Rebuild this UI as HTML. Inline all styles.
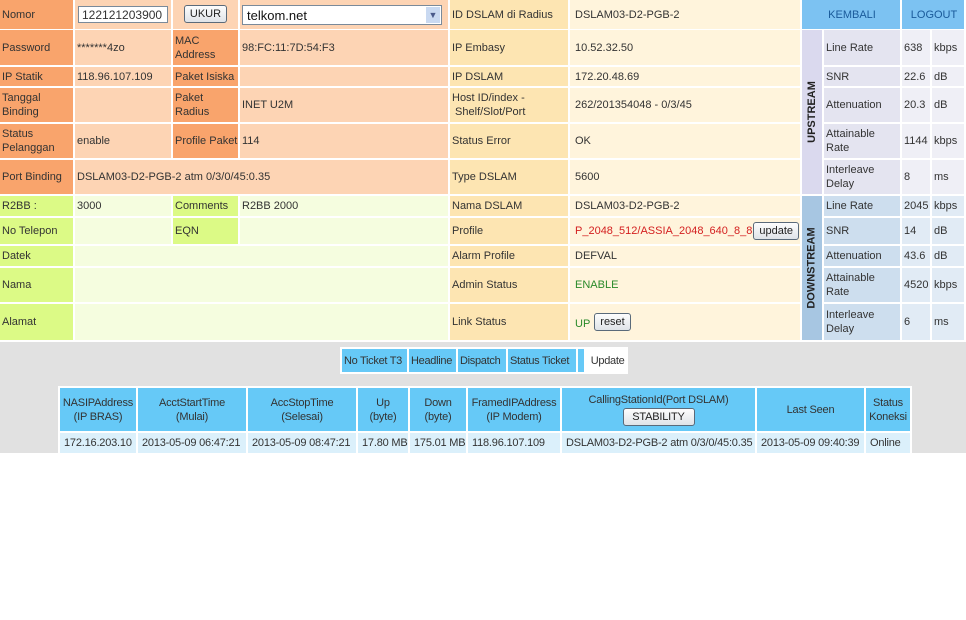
<!DOCTYPE html>
<html><head><meta charset="utf-8"><style>
body{margin:0;width:966px;height:620px;background:#fff;position:relative;overflow:hidden;font-family:"Liberation Sans",Arial,sans-serif}
.c{position:absolute;display:flex;align-items:center;padding-left:2px;box-sizing:border-box;font-size:11px;line-height:14px;color:#333;white-space:nowrap}
.ol{background:#f9a46c}.ov{background:#fdd4b4}
.gl{background:#dcfa86}.gv{background:#f5fddf}
.yl{background:#fde5b2}.yv{background:#fff4dc}
.ul{background:#e4e4f0}.uv{background:#efeff6}
.dl{background:#cddeee}.dv{background:#e1ebf5}
.btn{border:1px solid #5a6a7a;border-radius:3px;background:linear-gradient(#fdfdfd,#dfe3e8);font-size:11px;padding:1px 5px;color:#222}
.vt{position:absolute;display:flex;align-items:center;justify-content:center}
.vt span{transform:rotate(-90deg);font-weight:bold;font-size:11px;color:#222;white-space:nowrap}
.h{position:absolute;top:388px;height:43px;background:#66c9f7;display:flex;flex-direction:column;align-items:center;justify-content:center;text-align:center;font-size:11px;line-height:14px;color:#333;white-space:nowrap;letter-spacing:-0.2px}
.d{position:absolute;top:433px;height:20px;background:#dbf0fb;display:flex;align-items:center;padding-left:4px;box-sizing:border-box;font-size:11px;color:#333;white-space:nowrap;letter-spacing:-0.2px}
</style></head><body>
<div class="c ol" style="left:0;top:0;width:73px;height:29px">Nomor</div>
<div class="c ov" style="left:75px;top:0;width:96px;height:29px"><div style="background:#fff;border:1px solid #7a8a9a;width:90px;height:17px;font-size:12px;line-height:17px;padding-left:3px;box-sizing:border-box;margin-left:1px">122121203900</div></div>
<div class="c ov" style="left:173px;top:0;width:65px;height:29px;justify-content:center;padding:0"><span class="btn" style="margin-top:-2px">UKUR</span></div>
<div class="c ov" style="left:240px;top:0;width:208px;height:29px"><div style="background:#fff;border:1px solid #7a8a9a;width:200px;height:20px;font-size:13px;line-height:20px;padding-left:4px;box-sizing:border-box;position:relative;color:#111">telkom.net<span style="position:absolute;right:1px;top:1px;width:14px;height:16px;background:#c9d9f1;font-size:9px;text-align:center;line-height:16px;color:#4a5a8a">&#9660;</span></div></div>
<div class="c ol" style="left:0;top:30px;width:73px;height:35px">Password</div>
<div class="c ov" style="left:75px;top:30px;width:96px;height:35px">*******4zo</div>
<div class="c ol" style="left:173px;top:30px;width:65px;height:35px">MAC<br>Address</div>
<div class="c ov" style="left:240px;top:30px;width:208px;height:35px">98:FC:11:7D:54:F3</div>
<div class="c ol" style="left:0;top:67px;width:73px;height:19px">IP Statik</div>
<div class="c ov" style="left:75px;top:67px;width:96px;height:19px">118.96.107.109</div>
<div class="c ol" style="left:173px;top:67px;width:65px;height:19px">Paket Isiska</div>
<div class="c ov" style="left:240px;top:67px;width:208px;height:19px"></div>
<div class="c ol" style="left:0;top:88px;width:73px;height:34px">Tanggal<br>Binding</div>
<div class="c ov" style="left:75px;top:88px;width:96px;height:34px"></div>
<div class="c ol" style="left:173px;top:88px;width:65px;height:34px">Paket<br>Radius</div>
<div class="c ov" style="left:240px;top:88px;width:208px;height:34px">INET U2M</div>
<div class="c ol" style="left:0;top:124px;width:73px;height:34px">Status<br>Pelanggan</div>
<div class="c ov" style="left:75px;top:124px;width:96px;height:34px">enable</div>
<div class="c ol" style="left:173px;top:124px;width:65px;height:34px">Profile Paket</div>
<div class="c ov" style="left:240px;top:124px;width:208px;height:34px">114</div>
<div class="c ol" style="left:0;top:160px;width:73px;height:34px">Port Binding</div>
<div class="c ov" style="left:75px;top:160px;width:373px;height:34px">DSLAM03-D2-PGB-2 atm 0/3/0/45:0.35</div>
<div class="c gl" style="left:0;top:196px;width:73px;height:20px">R2BB :</div>
<div class="c gv" style="left:75px;top:196px;width:96px;height:20px">3000</div>
<div class="c gl" style="left:173px;top:196px;width:65px;height:20px">Comments</div>
<div class="c gv" style="left:240px;top:196px;width:208px;height:20px">R2BB 2000</div>
<div class="c gl" style="left:0;top:218px;width:73px;height:26px">No Telepon</div>
<div class="c gv" style="left:75px;top:218px;width:96px;height:26px"></div>
<div class="c gl" style="left:173px;top:218px;width:65px;height:26px">EQN</div>
<div class="c gv" style="left:240px;top:218px;width:208px;height:26px"></div>
<div class="c gl" style="left:0;top:246px;width:73px;height:20px">Datek</div>
<div class="c gv" style="left:75px;top:246px;width:373px;height:20px"></div>
<div class="c gl" style="left:0;top:268px;width:73px;height:34px">Nama</div>
<div class="c gv" style="left:75px;top:268px;width:373px;height:34px"></div>
<div class="c gl" style="left:0;top:304px;width:73px;height:36px">Alamat</div>
<div class="c gv" style="left:75px;top:304px;width:373px;height:36px"></div>
<div class="c yl" style="left:450px;top:0;width:118px;height:29px">ID DSLAM di Radius</div>
<div class="c yv" style="left:570px;top:0;width:230px;height:29px;padding-left:5px">DSLAM03-D2-PGB-2</div>
<div class="c yl" style="left:450px;top:30px;width:118px;height:35px">IP Embasy</div>
<div class="c yv" style="left:570px;top:30px;width:230px;height:35px;padding-left:5px">10.52.32.50</div>
<div class="c yl" style="left:450px;top:67px;width:118px;height:19px">IP DSLAM</div>
<div class="c yv" style="left:570px;top:67px;width:230px;height:19px;padding-left:5px">172.20.48.69</div>
<div class="c yl" style="left:450px;top:88px;width:118px;height:34px">Host ID/index -<br>&nbsp;Shelf/Slot/Port</div>
<div class="c yv" style="left:570px;top:88px;width:230px;height:34px;padding-left:5px">262/201354048 - 0/3/45</div>
<div class="c yl" style="left:450px;top:124px;width:118px;height:34px">Status Error</div>
<div class="c yv" style="left:570px;top:124px;width:230px;height:34px;padding-left:5px">OK</div>
<div class="c yl" style="left:450px;top:160px;width:118px;height:34px">Type DSLAM</div>
<div class="c yv" style="left:570px;top:160px;width:230px;height:34px;padding-left:5px">5600</div>
<div class="c yl" style="left:450px;top:196px;width:118px;height:20px">Nama DSLAM</div>
<div class="c yv" style="left:570px;top:196px;width:230px;height:20px;padding-left:5px">DSLAM03-D2-PGB-2</div>
<div class="c yl" style="left:450px;top:218px;width:118px;height:26px">Profile</div>
<div class="c yv" style="left:570px;top:218px;width:230px;height:26px;padding-left:5px"><span style="color:#d42020">P_2048_512/ASSIA_2048_640_8_8</span><span class="btn" style="margin-left:1px">update</span></div>
<div class="c yl" style="left:450px;top:246px;width:118px;height:20px">Alarm Profile</div>
<div class="c yv" style="left:570px;top:246px;width:230px;height:20px;padding-left:5px">DEFVAL</div>
<div class="c yl" style="left:450px;top:268px;width:118px;height:34px">Admin Status</div>
<div class="c yv" style="left:570px;top:268px;width:230px;height:34px;padding-left:5px;color:#2a8a2a">ENABLE</div>
<div class="c yl" style="left:450px;top:304px;width:118px;height:36px">Link Status</div>
<div class="c yv" style="left:570px;top:304px;width:230px;height:36px;padding-left:5px"><span style="color:#2a8a2a;margin-top:4px">UP</span><span class="btn" style="margin-left:4px">reset</span></div>
<div class="c" style="left:802px;top:0;width:98px;height:29px;background:#7cc2f2;justify-content:center;color:#1a5a9a">KEMBALI</div>
<div class="c" style="left:902px;top:0;width:62px;height:29px;background:#7cc2f2;justify-content:center;color:#1a5a9a">LOGOUT</div>
<div class="vt" style="left:802px;top:30px;width:20px;height:164px;background:#dad9ee"><span>UPSTREAM</span></div>
<div class="c ul" style="left:824px;top:30px;width:76px;height:35px">Line Rate</div>
<div class="c uv" style="left:902px;top:30px;width:28px;height:35px">638</div>
<div class="c uv" style="left:932px;top:30px;width:32px;height:35px">kbps</div>
<div class="c ul" style="left:824px;top:67px;width:76px;height:19px">SNR</div>
<div class="c uv" style="left:902px;top:67px;width:28px;height:19px">22.6</div>
<div class="c uv" style="left:932px;top:67px;width:32px;height:19px">dB</div>
<div class="c ul" style="left:824px;top:88px;width:76px;height:34px">Attenuation</div>
<div class="c uv" style="left:902px;top:88px;width:28px;height:34px">20.3</div>
<div class="c uv" style="left:932px;top:88px;width:32px;height:34px">dB</div>
<div class="c ul" style="left:824px;top:124px;width:76px;height:34px">Attainable<br>Rate</div>
<div class="c uv" style="left:902px;top:124px;width:28px;height:34px">1144</div>
<div class="c uv" style="left:932px;top:124px;width:32px;height:34px">kbps</div>
<div class="c ul" style="left:824px;top:160px;width:76px;height:34px">Interleave<br>Delay</div>
<div class="c uv" style="left:902px;top:160px;width:28px;height:34px">8</div>
<div class="c uv" style="left:932px;top:160px;width:32px;height:34px">ms</div>
<div class="vt" style="left:802px;top:196px;width:20px;height:144px;background:#a7c6e2"><span>DOWNSTREAM</span></div>
<div class="c dl" style="left:824px;top:196px;width:76px;height:20px">Line Rate</div>
<div class="c dv" style="left:902px;top:196px;width:28px;height:20px">2045</div>
<div class="c dv" style="left:932px;top:196px;width:32px;height:20px">kbps</div>
<div class="c dl" style="left:824px;top:218px;width:76px;height:26px">SNR</div>
<div class="c dv" style="left:902px;top:218px;width:28px;height:26px">14</div>
<div class="c dv" style="left:932px;top:218px;width:32px;height:26px">dB</div>
<div class="c dl" style="left:824px;top:246px;width:76px;height:20px">Attenuation</div>
<div class="c dv" style="left:902px;top:246px;width:28px;height:20px">43.6</div>
<div class="c dv" style="left:932px;top:246px;width:32px;height:20px">dB</div>
<div class="c dl" style="left:824px;top:268px;width:76px;height:34px">Attainable<br>Rate</div>
<div class="c dv" style="left:902px;top:268px;width:28px;height:34px">4520</div>
<div class="c dv" style="left:932px;top:268px;width:32px;height:34px">kbps</div>
<div class="c dl" style="left:824px;top:304px;width:76px;height:36px">Interleave<br>Delay</div>
<div class="c dv" style="left:902px;top:304px;width:28px;height:36px">6</div>
<div class="c dv" style="left:932px;top:304px;width:32px;height:36px">ms</div>
<div style="position:absolute;left:0;top:342px;width:966px;height:111px;background:#e1e1e1"></div>
<div style="position:absolute;left:340px;top:347px;width:288px;height:27px;background:#fff"></div>
<div class="c" style="left:342px;top:349px;width:65px;height:23px;background:#66c9f7;letter-spacing:-0.3px">No Ticket T3</div>
<div class="c" style="left:409px;top:349px;width:47px;height:23px;background:#66c9f7;letter-spacing:-0.3px">Headline</div>
<div class="c" style="left:458px;top:349px;width:48px;height:23px;background:#66c9f7;letter-spacing:-0.3px">Dispatch</div>
<div class="c" style="left:508px;top:349px;width:68px;height:23px;background:#66c9f7;letter-spacing:-0.3px">Status Ticket</div>
<div class="c" style="left:578px;top:349px;width:6px;height:23px;background:#66c9f7"></div>
<div class="c" style="left:586px;top:349px;width:40px;height:23px;background:#fff;letter-spacing:-0.3px">&nbsp;Update</div>
<div style="position:absolute;left:58px;top:386px;width:854px;height:68px;background:#fff"></div>
<div class="h" style="left:60px;width:76px">NASIPAddress<br>(IP BRAS)</div>
<div class="h" style="left:138px;width:108px">AcctStartTime<br>(Mulai)</div>
<div class="h" style="left:248px;width:108px">AccStopTime<br>(Selesai)</div>
<div class="h" style="left:358px;width:50px">Up<br>(byte)</div>
<div class="h" style="left:410px;width:56px">Down<br>(byte)</div>
<div class="h" style="left:468px;width:92px">FramedIPAddress<br>(IP Modem)</div>
<div class="h" style="left:562px;width:193px">CallingStationId(Port DSLAM)<span class="btn" style="display:inline-block;width:66px;padding:1px 2px;margin-top:1px">STABILITY</span></div>
<div class="h" style="left:757px;width:107px">Last Seen</div>
<div class="h" style="left:866px;width:44px">Status<br>Koneksi</div>
<div class="d" style="left:60px;width:76px">172.16.203.10</div>
<div class="d" style="left:138px;width:108px">2013-05-09 06:47:21</div>
<div class="d" style="left:248px;width:108px">2013-05-09 08:47:21</div>
<div class="d" style="left:358px;width:50px">17.80 MB</div>
<div class="d" style="left:410px;width:56px">175.01 MB</div>
<div class="d" style="left:468px;width:92px">118.96.107.109</div>
<div class="d" style="left:562px;width:193px">DSLAM03-D2-PGB-2 atm 0/3/0/45:0.35</div>
<div class="d" style="left:757px;width:107px">2013-05-09 09:40:39</div>
<div class="d" style="left:866px;width:44px">Online</div>
</body></html>
